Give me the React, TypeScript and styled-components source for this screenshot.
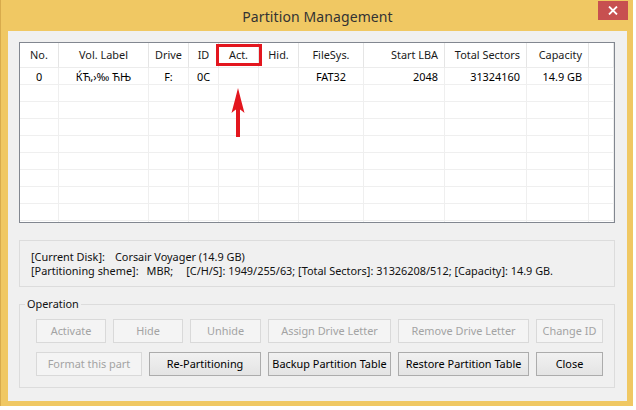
import React from "react";
import styled, { createGlobalStyle } from "styled-components";

const Global = createGlobalStyle`
  * { box-sizing: border-box; }
  html, body { margin: 0; padding: 0; background: #ffffff; }
  body { font-family: "Noto Sans", "Open Sans", sans-serif; font-size: 10.9px; color: #000; }
`;

const Window = styled.div`
  width: 633px;
  height: 406px;
  background: #f0c863;
  border-left: 1px solid #d8ab4c;
  padding: 0 6px 5px 7px;
  display: flex;
  flex-direction: column;
`;

const TitleBar = styled.div`
  height: 31px;
  display: grid;
  grid-template-columns: 1fr auto 1fr;
  align-items: center;
`;

const Title = styled.div`
  grid-column: 2;
  font-size: 14px;
  color: #333333;
  letter-spacing: 0.1px;
  padding-top: 1px;
`;

const CloseButton = styled.div`
  grid-column: 3;
  justify-self: end;
  align-self: start;
  margin-top: 1px;
  margin-right: -1px;
  width: 30px;
  height: 19px;
  background: #c75050;
  display: flex;
  align-items: center;
  justify-content: center;
`;

const Client = styled.div`
  flex: 1;
  background: #f0f0f0;
  padding: 11px 12px 0 11px;
  display: flex;
  flex-direction: column;
`;

const ListWrap = styled.div`
  position: relative;
  height: 181px;
  flex-shrink: 0;
  border: 1px solid #828790;
  background: #ffffff;
  overflow: hidden;
`;

const Grid = styled.table`
  width: 594px;
  table-layout: fixed;
  border-collapse: separate;
  border-spacing: 0;
`;

const Th = styled.th<{ $w: number; $align?: string }>`
  width: ${(p) => p.$w}px;
  height: 25px;
  padding: 0 6px 1px;
  font-weight: normal;
  text-align: ${(p) => p.$align || "center"};
  color: #1a1a1a;
  border-right: 1px solid #e5e5e5;
  border-bottom: 1px solid #ececec;
  white-space: nowrap;
  overflow: hidden;
`;

const Td = styled.td<{ $align?: string }>`
  height: 17px;
  padding: 0 6px;
  text-align: ${(p) => p.$align || "center"};
  border-right: 1px solid #efefef;
  border-bottom: 1px solid #efefef;
  white-space: nowrap;
  line-height: 15px;
`;

const RedBox = styled.div`
  position: absolute;
  left: 196px;
  top: 1px;
  width: 46px;
  height: 22px;
  border: 3px solid #e3161e;
`;

const Arrow = styled.svg`
  position: absolute;
  left: 211px;
  top: 45px;
`;

const InfoPanel = styled.div`
  margin-top: 17px;
  height: 47px;
  flex-shrink: 0;
  border: 1px solid #dcdcdc;
  padding: 0 11px;
  display: flex;
  flex-direction: column;
  justify-content: center;
  line-height: 14px;
  color: #111;
`;

const InfoLine = styled.div`
  white-space: nowrap;
`;

const Gap = styled.span<{ $w: number }>`
  display: inline-block;
  width: ${(p) => p.$w}px;
`;

const Group = styled.fieldset`
  margin: 10px 0 0;
  padding: 8px 5px 10px;
  border: 1px solid #dcdcdc;
  height: 91px;
  min-width: 0;
`;

const Legend = styled.legend`
  padding: 0 2px;
  line-height: 14px;
  color: #111;
`;

const Rows = styled.div`
  display: flex;
  flex-direction: column;
  gap: 9px;
  padding-left: 11px;
`;

const ButtonRow = styled.div`
  display: flex;
  gap: 7px;
`;

const Button = styled.div<{ $w: number; $disabled?: boolean }>`
  width: ${(p) => p.$w}px;
  height: 24px;
  display: flex;
  align-items: center;
  justify-content: center;
  white-space: nowrap;
  border: 1px solid ${(p) => (p.$disabled ? "#d9d9d9" : "#acacac")};
  background: ${(p) =>
    p.$disabled ? "#f4f4f4" : "linear-gradient(#f1f1f1, #e4e4e4)"};
  color: ${(p) => (p.$disabled ? "#a3a3a3" : "#000")};
  padding-bottom: 1px;
`;

const columns = [
  { label: "No.", w: 39 },
  { label: "Vol. Label", w: 90 },
  { label: "Drive", w: 40 },
  { label: "ID", w: 30 },
  { label: "Act.", w: 40 },
  { label: "Hid.", w: 40 },
  { label: "FileSys.", w: 65 },
  { label: "Start LBA", w: 81, align: "right" },
  { label: "Total Sectors", w: 82, align: "right" },
  { label: "Capacity", w: 62, align: "right" },
  { label: "", w: 25 },
];

const firstRow = ["0", "ЌЋ‚›‰ ЋЊ", "F:", "0C", "", "", "FAT32", "2048", "31324160", "14.9 GB", ""];

const row1 = [
  { t: "Activate", w: 70, d: true },
  { t: "Hide", w: 70, d: true },
  { t: "Unhide", w: 71, d: true },
  { t: "Assign Drive Letter", w: 123, d: true },
  { t: "Remove Drive Letter", w: 131, d: true },
  { t: "Change ID", w: 67, d: true },
];

const row2 = [
  { t: "Format this part", w: 106, d: true },
  { t: "Re-Partitioning", w: 112, d: false },
  { t: "Backup Partition Table", w: 123, d: false },
  { t: "Restore Partition Table", w: 131, d: false },
  { t: "Close", w: 67, d: false },
];

export default function App() {
  const emptyRows = Array.from({ length: 9 });
  return (
    <>
      <Global />
      <Window>
        <TitleBar>
          <Title>Partition Management</Title>
          <CloseButton>
            <svg width="10" height="9" viewBox="0 0 10 9">
              <path d="M1 0.5 L9 8.5 M9 0.5 L1 8.5" stroke="#fff" strokeWidth="1.8" />
            </svg>
          </CloseButton>
        </TitleBar>
        <Client>
          <ListWrap>
            <Grid>
              <thead>
                <tr>
                  {columns.map((c, i) => (
                    <Th key={i} $w={c.w} $align={c.align}>
                      {c.label}
                    </Th>
                  ))}
                </tr>
              </thead>
              <tbody>
                <tr>
                  {firstRow.map((v, i) => (
                    <Td key={i} $align={columns[i].align}>
                      {v}
                    </Td>
                  ))}
                </tr>
                {emptyRows.map((_, r) => (
                  <tr key={r}>
                    {columns.map((c, i) => (
                      <Td key={i} />
                    ))}
                  </tr>
                ))}
              </tbody>
            </Grid>
            <RedBox />
            <Arrow width="14" height="50" viewBox="0 0 14 50">
              <path
                d="M7 0 Q10 12 13.5 25 Q11 22.5 9 21.5 L9 49 L5 49 L5 21.5 Q3 22.5 0.5 25 Q4 12 7 0 Z"
                fill="#e3161e"
              />
            </Arrow>
          </ListWrap>
          <InfoPanel>
            <InfoLine>
              [Current Disk]:<Gap $w={10} />Corsair Voyager (14.9 GB)
            </InfoLine>
            <InfoLine>
              [Partitioning sheme]:<Gap $w={8} />MBR;<Gap $w={13} />[C/H/S]: 1949/255/63; [Total Sectors]: 31326208/512; [Capacity]: 14.9 GB.
            </InfoLine>
          </InfoPanel>
          <Group>
            <Legend>Operation</Legend>
            <Rows>
              <ButtonRow>
                {row1.map((b) => (
                  <Button key={b.t} $w={b.w} $disabled={b.d}>
                    {b.t}
                  </Button>
                ))}
              </ButtonRow>
              <ButtonRow>
                {row2.map((b) => (
                  <Button key={b.t} $w={b.w} $disabled={b.d}>
                    {b.t}
                  </Button>
                ))}
              </ButtonRow>
            </Rows>
          </Group>
        </Client>
      </Window>
    </>
  );
}
